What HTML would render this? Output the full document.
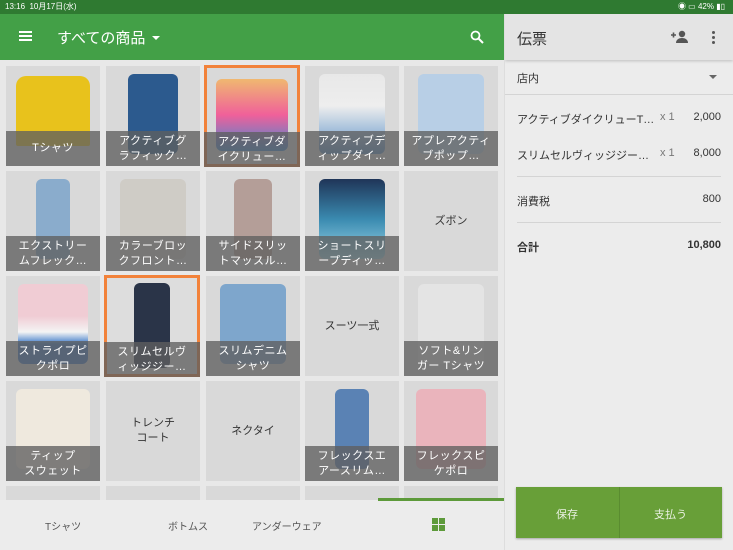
<!DOCTYPE html><html><head><meta charset="utf-8"><style>
*{margin:0;padding:0;box-sizing:border-box}
html,body{width:733px;height:550px;overflow:hidden}
body{font-family:"Liberation Sans","Noto Sans CJK JP",sans-serif;background:#e6e6e6;position:relative}
.sb{position:absolute;left:0;top:0;width:733px;height:14px;background:#2f7a31;color:#fff;font-size:8px;line-height:14px;padding:0 5px}
.ab{position:absolute;left:0;top:14px;width:504px;height:46px;background:#43a047;color:#fff}
.rp{position:absolute;left:504px;top:14px;width:229px;height:536px;background:#ececec;border-left:1px solid #ddd;overflow:hidden}
.rh{height:46px;background:#e4e4e4;box-shadow:0 1px 3px rgba(0,0,0,.2);position:relative}
.grid{position:absolute;left:0;top:60px;width:504px;height:440px;overflow:hidden;background:#e8e8e8}
.t{position:absolute;width:94px;height:100px;background:#d9d9d9;overflow:hidden}
.t .s{position:absolute;left:22px;top:8px;width:50px;height:80px;border-radius:6px}
.t .l{position:absolute;left:0;bottom:0;width:100%;height:35px;background:rgba(95,95,95,.78);color:#fff;font-size:11px;line-height:15px;text-align:center;padding-top:3px;letter-spacing:.5px}
.t .p{position:absolute;width:100%;top:0;height:100%;display:flex;align-items:center;justify-content:center;text-align:center;color:#333;font-size:11px;line-height:15px}
.sel{outline:3px solid #f2823a;outline-offset:-3px}
.bn{position:absolute;left:0;top:500px;width:504px;height:50px;background:#ececec;font-size:10px;color:#555}
.bn span{position:absolute;top:18px}
.row{position:absolute;left:12px;right:12px;font-size:11px;color:#333}
</style></head><body>
<div class="sb">13:16&nbsp;&nbsp;10月17日(水)<span style="position:absolute;right:8px">◉ ▭ 42% ▮▯</span></div>
<div class="ab">
<div style="position:absolute;left:19px;top:17px;width:13px;height:2px;background:#fff;box-shadow:0 4px 0 #fff,0 8px 0 #fff"></div>
<div style="position:absolute;left:57px;top:13px;font-size:15px">すべての商品</div>
<div style="position:absolute;left:152px;top:22px;border-left:4px solid transparent;border-right:4px solid transparent;border-top:4px solid #fff"></div>
<svg style="position:absolute;left:470px;top:16px" width="14" height="14" viewBox="0 0 14 14"><circle cx="5.5" cy="5.5" r="4" stroke="#fff" stroke-width="1.8" fill="none"/><path d="M8.5 8.5L13 13" stroke="#fff" stroke-width="2"/></svg>
</div>
<div class="grid">
<div class="t" style="left:6px;top:6px"><div class="s" style="background:#e8c21c;left:10px;width:74px;top:10px;height:70px;border-radius:10px 10px 2px 2px"></div><div class="l" style="padding-top:10px">Tシャツ</div></div>
<div class="t" style="left:106px;top:6px"><div class="s" style="background:#2c5a8e"></div><div class="l">アクティブグ<br>ラフィック…</div></div>
<div class="t sel" style="left:204px;top:5px;width:96px;height:102px"><div class="s" style="background:linear-gradient(#f0b870,#f0609a,#3a8ad6);left:12px;width:72px;top:14px;height:72px"></div><div class="l">アクティブダ<br>イクリュー…</div></div>
<div class="t" style="left:305px;top:6px"><div class="s" style="background:linear-gradient(#e8e8e8,#eee 40%,#5a90c8);left:14px;width:66px"></div><div class="l">アクティブデ<br>ィップダイ…</div></div>
<div class="t" style="left:404px;top:6px"><div class="s" style="background:#b8cfe6;left:14px;width:66px"></div><div class="l">アプレアクティ<br>ブポップ…</div></div>

<div class="t" style="left:6px;top:111px"><div class="s" style="background:#8aaccc;left:30px;width:34px"></div><div class="l">エクストリー<br>ムフレック…</div></div>
<div class="t" style="left:106px;top:111px"><div class="s" style="background:#cfccc6;left:14px;width:66px"></div><div class="l">カラーブロッ<br>クフロント…</div></div>
<div class="t" style="left:206px;top:111px"><div class="s" style="background:#b49e98;left:28px;width:38px"></div><div class="l">サイドスリッ<br>トマッスル…</div></div>
<div class="t" style="left:305px;top:111px"><div class="s" style="background:linear-gradient(#1f3558,#3a8ab0,#9cd8e8);left:14px;width:66px"></div><div class="l">ショートスリ<br>ープディッ…</div></div>
<div class="t" style="left:404px;top:111px"><div class="p">ズボン</div></div>

<div class="t" style="left:6px;top:216px"><div class="s" style="background:linear-gradient(#f0ccd4 40%,#f4f4f4 60%,#3b78c8 75%);left:12px;width:70px"></div><div class="l">ストライプピ<br>クポロ</div></div>
<div class="t sel" style="left:104px;top:215px;width:96px;height:102px;background:#ddd"><div class="s" style="background:#2a3448;left:30px;width:36px;height:85px"></div><div class="l">スリムセルヴ<br>ィッジジー…</div></div>
<div class="t" style="left:206px;top:216px"><div class="s" style="background:#7ea6cc;left:14px;width:66px"></div><div class="l">スリムデニム<br>シャツ</div></div>
<div class="t" style="left:305px;top:216px"><div class="p">スーツ一式</div></div>
<div class="t" style="left:404px;top:216px"><div class="s" style="background:#e4e4e4;left:14px;width:66px"></div><div class="l">ソフト&amp;リン<br>ガー Tシャツ</div></div>

<div class="t" style="left:6px;top:321px"><div class="s" style="background:#efe9de;left:10px;width:74px"></div><div class="l">ティップ<br>スウェット</div></div>
<div class="t" style="left:106px;top:321px"><div class="p">トレンチ<br>コート</div></div>
<div class="t" style="left:206px;top:321px"><div class="p">ネクタイ</div></div>
<div class="t" style="left:305px;top:321px"><div class="s" style="background:#5a82b4;left:30px;width:34px"></div><div class="l">フレックスエ<br>アースリム…</div></div>
<div class="t" style="left:404px;top:321px"><div class="s" style="background:#eab4bc;left:12px;width:70px"></div><div class="l">フレックスピ<br>ケポロ</div></div>

<div class="t" style="left:6px;top:426px"></div><div class="t" style="left:106px;top:426px"></div><div class="t" style="left:206px;top:426px"></div><div class="t" style="left:305px;top:426px"></div><div class="t" style="left:404px;top:426px"></div>
</div>
<div class="bn">
<div style="position:absolute;left:378px;top:-2px;width:126px;height:3px;background:#5d9a3a"></div>
<span style="left:45px">Tシャツ</span><span style="left:168px">ボトムス</span><span style="left:252px">アンダーウェア</span>
<div style="position:absolute;left:432px;top:18px;width:13px;height:13px;background:linear-gradient(#ececec,#ececec) 6px 0/1px 13px no-repeat,linear-gradient(#ececec,#ececec) 0 6px/13px 1px no-repeat,#5d9a3a"></div>
</div>
<div class="rp">
<div class="rh"><div style="position:absolute;left:12px;top:14px;font-size:15px;color:#333">伝票</div>
<svg style="position:absolute;left:166px;top:16px" width="18" height="14" viewBox="0 0 18 14"><path d="M0 5h5M2.5 2.5v5" stroke="#555" stroke-width="1.6"/><circle cx="11" cy="4" r="3.2" fill="#555"/><path d="M5 13c0-3.5 3-5 6-5s6 1.5 6 5z" fill="#555"/></svg>
<div style="position:absolute;left:207px;top:17px;width:3px;height:3px;border-radius:50%;background:#555;box-shadow:0 5px 0 #555,0 10px 0 #555"></div></div>
<div class="row" style="top:56px">店内<span style="position:absolute;right:4px;top:5px;border-left:4px solid transparent;border-right:4px solid transparent;border-top:4px solid #666"></span></div>
<div style="position:absolute;left:0;right:0;top:80px;border-top:1px solid #d4d4d4"></div>
<div class="row" style="top:97px">アクティブダイクリューT…<span style="position:absolute;left:143px;color:#777">x 1</span><span style="position:absolute;right:0">2,000</span></div>
<div class="row" style="top:133px">スリムセルヴィッジジー…<span style="position:absolute;left:143px;color:#777">x 1</span><span style="position:absolute;right:0">8,000</span></div>
<div style="position:absolute;left:12px;right:12px;top:162px;border-top:1px solid #d4d4d4"></div>
<div class="row" style="top:179px">消費税<span style="position:absolute;right:0">800</span></div>
<div style="position:absolute;left:12px;right:12px;top:208px;border-top:1px solid #d4d4d4"></div>
<div class="row" style="top:225px;font-weight:bold">合計<span style="position:absolute;right:0">10,800</span></div>
<div style="position:absolute;left:11px;top:473px;width:206px;height:51px;background:#689f38;box-shadow:0 1px 2px rgba(0,0,0,.3);color:#e8f0e0;font-size:11px">
<span style="position:absolute;left:40px;top:19px">保存</span><div style="position:absolute;left:103px;top:0;height:51px;border-left:1px solid #5a8c30"></div><span style="position:absolute;left:138px;top:19px">支払う</span></div>
</div>
</body></html>
